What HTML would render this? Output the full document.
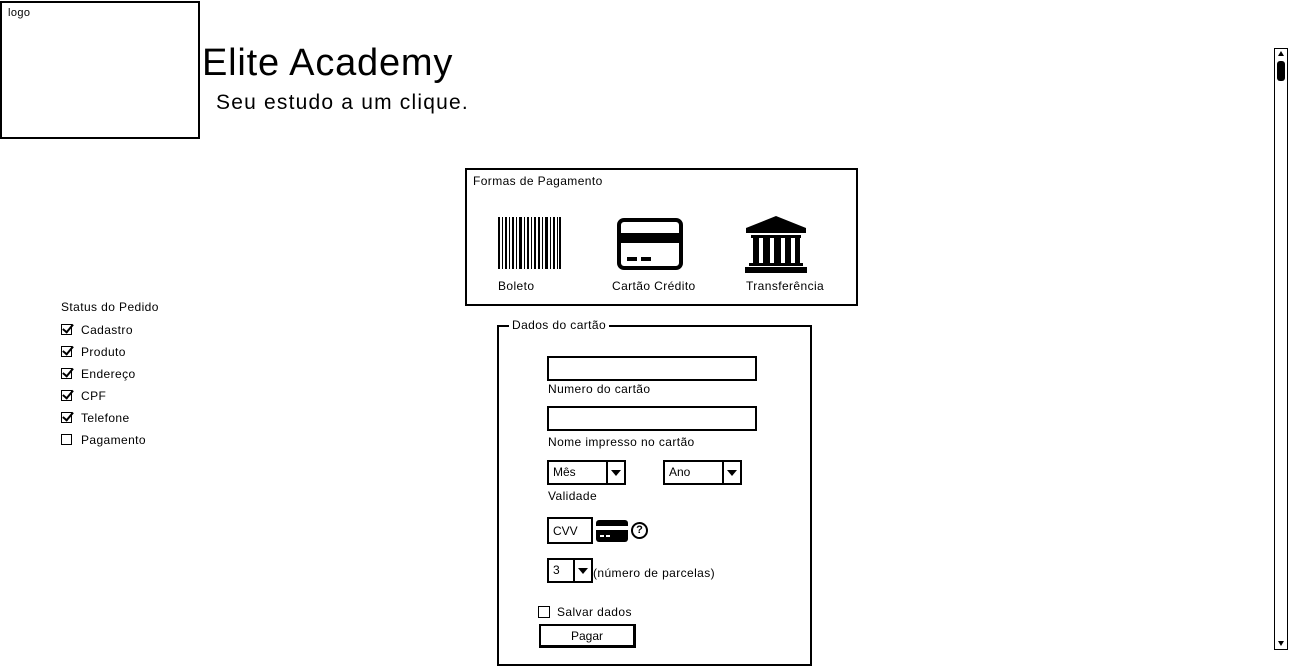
<!DOCTYPE html>
<html><head><meta charset="utf-8"><style>
body{margin:0;width:1290px;height:666px;background:#fff;position:relative;overflow:hidden;font-family:"Liberation Sans",sans-serif;color:#000}
.a{position:absolute}
.s{font-size:12px;letter-spacing:0.4px}
.box{position:absolute;border:2px solid #000;box-sizing:border-box;background:#fff}
.chk{position:absolute;width:10px;height:10px;border:1px solid #000}
.sel{position:absolute;border:2px solid #000;box-sizing:border-box;height:25px;font-size:12px;padding:3px 4px}
.sel i{position:absolute;right:0;top:0;bottom:0;width:16px;border-left:2px solid #000}
.sel i:after{content:"";position:absolute;left:3px;top:8px;border:5px solid transparent;border-top:6px solid #000}
.cb{position:absolute;left:61px;width:11px;height:11px;border:1px solid #000;box-sizing:border-box}
.cb.k:after{content:"";position:absolute;left:3px;top:-3px;width:4px;height:9px;border-right:2px solid #000;border-bottom:2px solid #000;transform:rotate(40deg)}
</style></head><body>
<div class="box" style="left:0;top:1px;width:200px;height:138px"></div>
<div class="a s" style="left:8px;top:7px;font-size:11px">logo</div>
<div class="a" style="left:202px;top:42px;font-size:38px;letter-spacing:0.8px">Elite Academy</div>
<div class="a" style="left:216px;top:91px;font-size:21px;letter-spacing:1.2px">Seu estudo a um clique.</div>

<div class="a" style="left:1274px;top:48px;width:14px;height:602px;border:1px solid #000;box-sizing:border-box"></div>
<div class="a" style="left:1277px;top:61px;width:8px;height:20px;background:#000;border-radius:3px"></div>
<div class="a" style="left:1278px;top:51px;border:3px solid transparent;border-bottom:5px solid #000;border-top:0"></div>
<div class="a" style="left:1278px;top:641px;border:3px solid transparent;border-top:5px solid #000;border-bottom:0"></div>

<div class="a s" style="left:61px;top:300px">Status do Pedido</div>
<div class="cb k" style="top:324px"></div><div class="a s" style="left:81px;top:323px">Cadastro</div>
<div class="cb k" style="top:346px"></div><div class="a s" style="left:81px;top:345px">Produto</div>
<div class="cb k" style="top:368px"></div><div class="a s" style="left:81px;top:367px">Endereço</div>
<div class="cb k" style="top:390px"></div><div class="a s" style="left:81px;top:389px">CPF</div>
<div class="cb k" style="top:412px"></div><div class="a s" style="left:81px;top:411px">Telefone</div>
<div class="cb" style="top:434px"></div><div class="a s" style="left:81px;top:433px">Pagamento</div>

<div class="box" style="left:465px;top:168px;width:393px;height:138px"></div>
<div class="a s" style="left:473px;top:174px">Formas de Pagamento</div>
<svg class="a" style="left:498px;top:217px" width="64" height="52">
<g fill="#000"><rect x="0" width="2" height="52"/><rect x="4" width="1" height="52"/><rect x="7" width="2" height="52"/><rect x="11" width="1" height="52"/><rect x="14" width="2" height="52"/><rect x="18" width="1" height="52"/><rect x="21" width="3" height="52"/><rect x="26" width="1" height="52"/><rect x="29" width="2" height="52"/><rect x="33" width="1" height="52"/><rect x="36" width="2" height="52"/><rect x="40" width="2" height="52"/><rect x="44" width="1" height="52"/><rect x="47" width="3" height="52"/><rect x="52" width="1" height="52"/><rect x="55" width="2" height="52"/><rect x="59" width="1" height="52"/><rect x="61" width="2" height="52"/></g></svg>
<svg class="a" style="left:617px;top:218px" width="66" height="52">
<rect x="2" y="2" width="62" height="48" rx="5" fill="none" stroke="#000" stroke-width="4"/><rect x="2" y="15" width="62" height="10" fill="#000"/><rect x="10" y="39" width="10" height="4" fill="#000"/><rect x="24" y="39" width="10" height="4" fill="#000"/></svg>
<svg class="a" style="left:745px;top:216px" width="62" height="58">
<g fill="#000"><polygon points="31,0 61,12 61,17 1,17 1,12"/><rect x="6" y="19" width="50" height="3"/><rect x="8" y="22" width="6" height="25"/><rect x="18" y="22" width="7" height="25"/><rect x="29" y="22" width="7" height="25"/><rect x="40" y="22" width="6" height="25"/><rect x="50" y="22" width="5" height="25"/><rect x="4" y="47" width="54" height="3"/><rect x="0" y="51" width="62" height="6"/></g></svg>
<div class="a s" style="left:498px;top:279px">Boleto</div>
<div class="a s" style="left:612px;top:279px">Cartão Crédito</div>
<div class="a s" style="left:746px;top:279px">Transferência</div>

<div class="box" style="left:497px;top:325px;width:315px;height:341px"></div>
<div class="a s" style="left:509px;top:318px;background:#fff;padding:0 3px">Dados do cartão</div>
<div class="box" style="left:547px;top:356px;width:210px;height:25px"></div>
<div class="a s" style="left:548px;top:382px">Numero do cartão</div>
<div class="box" style="left:547px;top:406px;width:210px;height:25px"></div>
<div class="a s" style="left:548px;top:435px">Nome impresso no cartão</div>
<div class="sel" style="left:547px;top:460px;width:79px">Mês<i></i></div>
<div class="sel" style="left:663px;top:460px;width:79px">Ano<i></i></div>
<div class="a s" style="left:548px;top:489px">Validade</div>
<div class="sel" style="left:547px;top:517px;width:46px;height:27px;padding-top:5px">CVV</div>
<svg class="a" style="left:596px;top:520px" width="34" height="22"><rect x="0" y="0" width="32" height="22" rx="3" fill="#000"/><rect x="0" y="6" width="32" height="4" fill="#fff"/><rect x="4" y="15" width="4" height="2" fill="#fff"/><rect x="10" y="15" width="4" height="2" fill="#fff"/></svg>
<div class="a" style="left:631px;top:522px;width:13px;height:13px;border:2px solid #000;border-radius:50%;font-size:11px;font-weight:bold;text-align:center;line-height:13px">?</div>
<div class="sel" style="left:547px;top:558px;width:46px">3<i></i></div>
<div class="a s" style="left:593px;top:566px">(número de parcelas)</div>
<div class="chk" style="left:538px;top:606px"></div>
<div class="a s" style="left:557px;top:605px">Salvar dados</div>
<div class="box" style="left:539px;top:624px;width:97px;height:24px;border-bottom-width:3px;border-right-width:3px;text-align:center;font-size:12px;line-height:20px">Pagar</div>
</body></html>
